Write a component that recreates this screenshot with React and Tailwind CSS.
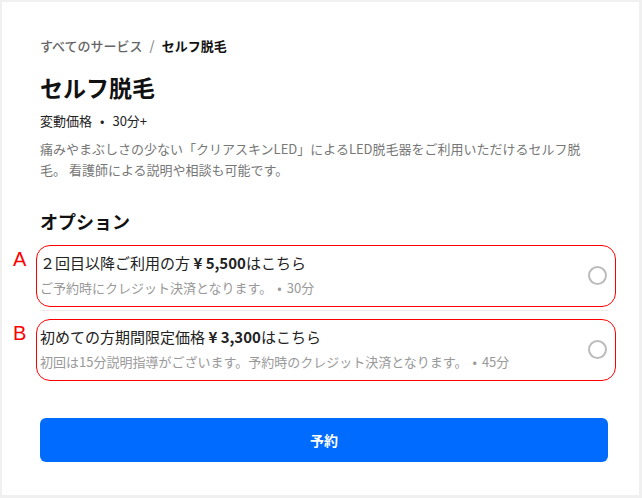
import React from "react";

const options = [
  {
    label: "A",
    title: "２回目以降ご利用の方",
    price: "¥ 5,500",
    tail: "はこちら",
    note: "ご予約時にクレジット決済となります。",
    time: "30分",
  },
  {
    label: "B",
    title: "初めての方期間限定価格",
    price: "¥ 3,300",
    tail: "はこちら",
    note: "初回は15分説明指導がございます。予約時のクレジット決済となります。",
    time: "45分",
  },
];

function OptionRow({ o }) {
  return (
    <div className="relative flex items-center justify-between pt-4 pb-[13px]">
      <div className="min-w-0">
        <p className="text-[15px] leading-[20px] text-[#222]">
          {o.title} <span className="font-bold">{o.price}</span>
          {o.tail}
        </p>
        <p className="mt-[6px] text-[13px] leading-[18px] text-[#999]">
          {o.note}
          <span className="mx-[5px]">•</span>
          {o.time}
        </p>
      </div>
      <span className="mr-[1px] h-[19px] w-[19px] shrink-0 rounded-full border-2 border-[#bbb]" />
      {/* annotation overlay */}
      <span
        className="pointer-events-none absolute -left-1 -right-2 top-2 bottom-[3px] rounded-[14px] border border-[#ff0000]"
        aria-hidden
      />
      <span
        className="absolute -left-[27px] top-[12px] text-[20px] leading-none text-[#ff0000]"
        style={{ fontFamily: '"Liberation Sans", Arial, sans-serif' }}
      >
        {o.label}
      </span>
    </div>
  );
}

export default function App() {
  return (
    <div
      className="min-h-[498px] bg-[#f0f0f0] pt-[2px] pl-[2px] pr-[3px] pb-[3px]"
      style={{ fontFamily: '"Noto Sans CJK JP", "Noto Sans", sans-serif' }}
    >
      <div className="h-[493px] bg-white pl-[38px] pt-[34px]">
        <div className="w-[568px]">
          <nav className="text-[13px] leading-[20px] font-medium">
            <span className="text-[#666]">すべてのサービス</span>
            <span className="mx-[7px] text-[#888]">/</span>
            <span className="font-bold text-[#111]">セルフ脱毛</span>
          </nav>

          <h1 className="mt-[15px] text-[23px] leading-[32px] font-bold text-[#111]">
            セルフ脱毛
          </h1>
          <p className="mt-[9px] text-[13px] leading-[18px] text-[#222]">
            変動価格<span className="mx-[8px]">•</span>30分+
          </p>
          <p className="mt-[8px] pr-[12px] text-[13px] leading-[21px] text-[#777]">
            痛みやまぶしさの少ない「クリアスキンLED」によるLED脱毛器をご利用いただけるセルフ脱毛。 看護師による説明や相談も可能です。
          </p>

          <h2 className="mt-[28px] text-[18px] leading-[26px] font-bold text-[#111]">
            オプション
          </h2>

          <div className="mt-[3px] divide-y divide-[#ececec]">
            {options.map((o) => (
              <OptionRow key={o.label} o={o} />
            ))}
          </div>

          <button className="mt-[34px] flex h-[44px] w-full items-center justify-center rounded-md bg-[#006bff] text-[14px] font-bold text-white">
            予約
          </button>
        </div>
      </div>
    </div>
  );
}
